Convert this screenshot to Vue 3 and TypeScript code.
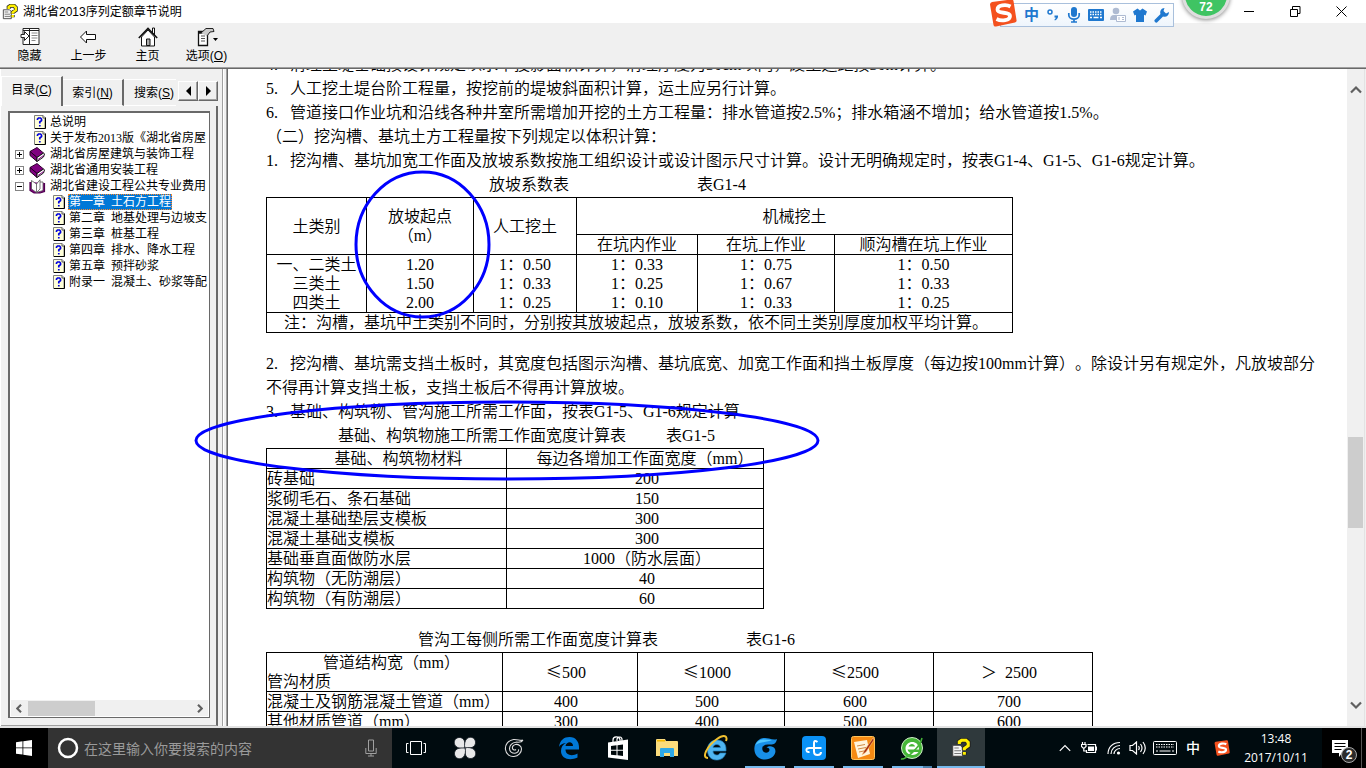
<script setup lang="ts">
import { ref } from 'vue'

interface TreeItem {
  label: string
  kind: 'page' | 'closed' | 'open'
  level: 1 | 2
}

const tree: TreeItem[] = [
  { label: '总说明', kind: 'page', level: 1 },
  { label: '关于发布2013版《湖北省房屋', kind: 'page', level: 1 },
  { label: '湖北省房屋建筑与装饰工程', kind: 'closed', level: 1 },
  { label: '湖北省通用安装工程', kind: 'closed', level: 1 },
  { label: '湖北省建设工程公共专业费用', kind: 'open', level: 1 },
  { label: '第一章\u00a0 土石方工程', kind: 'page', level: 2 },
  { label: '第二章\u00a0 地基处理与边坡支', kind: 'page', level: 2 },
  { label: '第三章\u00a0 桩基工程', kind: 'page', level: 2 },
  { label: '第四章\u00a0 排水、降水工程', kind: 'page', level: 2 },
  { label: '第五章\u00a0 预拌砂浆', kind: 'page', level: 2 },
  { label: '附录一\u00a0 混凝土、砂浆等配', kind: 'page', level: 2 },
]
const selected = ref(5)

const slopes: string[][] = [
  ['一、二类土', '三类土', '四类土'],
  ['1.20', '1.50', '2.00'],
  ['1：0.50', '1：0.33', '1：0.25'],
  ['1：0.33', '1：0.25', '1：0.10'],
  ['1：0.75', '1：0.67', '1：0.33'],
  ['1：0.50', '1：0.33', '1：0.25'],
]

const foundations: [string, string][] = [
  ['砖基础', '200'],
  ['浆砌毛石、条石基础', '150'],
  ['混凝土基础垫层支模板', '300'],
  ['混凝土基础支模板', '300'],
  ['基础垂直面做防水层', '1000（防水层面）'],
  ['构筑物（无防潮层）', '40'],
  ['构筑物（有防潮层）', '60'],
]

const pipes: string[][] = [
  ['混凝土及钢筋混凝土管道（mm）', '400', '500', '600', '700'],
  ['其他材质管道（mm）', '300', '400', '500', '600'],
]

const petalAngles = [0, 90, 180, 270]
</script>

<template>
  <div class="screen">
    <svg class="defs" aria-hidden="true">
      <symbol id="ic-page" viewBox="0 0 12 14">
        <path d="M.5.5H9l2 2V13.500H.5z" fill="#ffffd8" stroke="#808080" />
        <path d="M11.500 2.500V13.500H1" fill="none" stroke="#000" />
        <path d="M9 .5V3h2" fill="#fff" stroke="#555" />
        <path d="M3.500 5V4L4.500 3h2L7.500 4v1.500L5.800 7v1.500M5.800 10v1.600" fill="none" stroke="#0000e0" stroke-width="1.700" />
      </symbol>
      <symbol id="ic-book" viewBox="0 0 17 15">
        <path d="M1 4.500 8 .5l6.500 5.500L8 10.500z" fill="#800080" stroke="#300030" />
        <path d="M1 4.500v4l7 6v-4z" fill="#800080" stroke="#200020" />
        <path d="M8 10.500 14.500 6l1 1-1 3L8 14.500z" fill="#fff" stroke="#111" />
        <path d="m9 12.500 5.500-4" stroke="#800080" />
      </symbol>
      <symbol id="ic-open" viewBox="0 0 17 15">
        <path d="M1 3v8.500L5 14h6l4.500-1.500V4" fill="#800080" stroke="#500050" stroke-width="1.200" />
        <path d="M2.500 1.500v8.500l5 3.500V5zM7.500 5 11 .8v9.200l-3.500 3.500M11 3h3v8.500l-6.500 2" fill="#fff" stroke="#555" stroke-width=".8" />
      </symbol>
      <symbol id="ic-help" viewBox="0 0 18 18">
        <path d="M1.500 6.500h7l2 2v8h-9z" fill="#f4f4f4" stroke="#444" />
        <path d="M3 9h4M3 11.500h6M3 14h6" stroke="#777" />
        <path d="M7.500 5.500V3.500L9.500 2h4l2 2v3L12 9.500v1.500M12 12.500v2.500" fill="none" stroke="#222" stroke-width="4.500" />
        <path d="M7.500 5.500V3.500L9.500 2h4l2 2v3L12 9.500v1.500M12 12.500v2.500" fill="none" stroke="#fff000" stroke-width="2.800" />
      </symbol>
      <symbol id="ic-sogou" viewBox="0 0 28 28">
        <path d="M1 5.500Q1 3.500 3 3L22 .5Q24 0 24.500 2L27.500 21Q28 23 26 23.500L7 27.500Q5 28 4.500 26z" fill="#f4511e" />
        <path d="M21.500 7.500C17 5 8.500 6 8.500 10.500c0 5 12.500 1.500 12.500 6.500 0 4.500-8.500 5.500-13.500 3" fill="none" stroke="#fff" stroke-width="3.800" />
      </symbol>
      <symbol id="ic-keys" viewBox="0 0 24 14">
        <rect x=".5" y=".5" width="23" height="13" rx="1" fill="none" stroke="currentColor" />
        <path d="M3 3.500h18M3 6h18" stroke="currentColor" stroke-width="1.200" stroke-dasharray="1.500 1" />
        <path d="M3 10h2m1.500 0h11m1.500 0h2" stroke="currentColor" stroke-width="1.200" />
      </symbol>
    </svg>

    <header class="titlebar">
      <svg class="app-icon"><use href="#ic-help" /></svg>
      <h1>湖北省2013序列定额章节说明</h1>
      <div class="window-buttons">
        <button type="button" aria-label="最小化"><svg viewBox="0 0 11 11"><path d="M0 5.500h10" /></svg></button>
        <button type="button" aria-label="还原"><svg viewBox="0 0 11 11"><path d="M.5 3.500h7v7h-7zM2.500 3.500v-3h7.500v7H7.500" /></svg></button>
        <button type="button" aria-label="关闭"><svg viewBox="0 0 11 11"><path d="m.5.500 10 10m0-10-10 10" /></svg></button>
      </div>
    </header>

    <nav class="toolbar">
      <button type="button">
        <svg width="20" height="20" viewBox="0 0 20 20">
          <path d="M3 1.500h16v16H3zM9.500 2v16M3 3.500h16" fill="#fff" stroke="#222" />
          <path d="M11.500 6h6m-6 2.500h6m-6 2.500h6m-6 2.500h4" stroke="#888" />
          <path d="M1 7.500h3.500V4.500L9 9l-4.500 4.500v-3H1z" fill="#fff" stroke="#222" />
        </svg>
        <span>隐藏</span>
      </button>
      <button type="button">
        <svg width="20" height="20" viewBox="0 0 20 20"><path d="M1.500 10 7.500 4v3.500h9v5h-9V16z" fill="#fff" stroke="#111" /></svg>
        <span>上一步</span>
      </button>
      <button type="button">
        <svg width="20" height="20" viewBox="0 0 20 20">
          <path d="M3.500 10v9h13v-9L10 3z" fill="#fff" stroke="#111" />
          <path d="M14.500 1v5l2 2V1z" fill="#fff" stroke="#111" />
          <path d="M.8 11 10 1.500 19.200 11" fill="none" stroke="#111" stroke-width="1.600" />
          <path d="M8.500 18.500V12h3.500v6.500z" fill="#aaa" stroke="#111" />
        </svg>
        <span>主页</span>
      </button>
      <button type="button">
        <svg width="22" height="20" viewBox="0 0 22 20">
          <path d="M2.500 4.500h9v14h-9zM2.500 6h9" fill="#fff" stroke="#111" stroke-width="1.300" />
          <path d="M5 9h4m-4 2.500h4M5 14h4" stroke="#555" />
          <path d="m5 6 5-4.500h7l1 3-4 .5-3 4" fill="#ccc" stroke="#222" />
          <path d="M17 11h5l-2.500 3z" fill="#000" />
        </svg>
        <span>选项(<u>O</u>)</span>
      </button>
    </nav>

    <div class="workspace">
      <aside class="sidebar">
        <div class="tabs">
          <div class="tab-list" role="tablist">
            <button type="button" role="tab" class="tab current" aria-selected="true">目录(<u>C</u>)</button>
            <button type="button" role="tab" class="tab">索引(<u>N</u>)</button>
            <button type="button" role="tab" class="tab last">搜索(<u>S</u>)</button>
          </div>
          <button type="button" class="spin" aria-label="向左"><svg viewBox="0 0 5 10"><path d="M5 0v10L0 5z" /></svg></button>
          <button type="button" class="spin" aria-label="向右"><svg viewBox="0 0 5 10"><path d="M0 0v10l5-5z" /></svg></button>
        </div>
        <div class="tab-body">
          <div class="tree-frame">
            <ul class="tree">
              <li v-for="(item, i) in tree" :key="i" :class="['node', 'level-' + item.level]">
                <span class="expander" v-if="item.kind !== 'page'">
                  <svg viewBox="0 0 9 9">
                    <rect x=".5" y=".5" width="8" height="8" fill="#fff" stroke="#848484" />
                    <path d="M2 4.500h5" stroke="#000" />
                    <path v-if="item.kind === 'closed'" d="M4.500 2v5" stroke="#000" />
                  </svg>
                </span>
                <svg v-if="item.kind === 'page'" class="page"><use href="#ic-page" /></svg>
                <svg v-else-if="item.kind === 'closed'" class="book"><use href="#ic-book" /></svg>
                <svg v-else class="book"><use href="#ic-open" /></svg>
                <button type="button" :class="{ selected: i === selected }" @click="selected = i">{{ item.label }}</button>
              </li>
            </ul>
            <div class="h-scroll">
              <svg viewBox="0 0 6 9"><path d="M5 .8 1.200 4.500 5 8.200" /></svg>
              <div class="h-track"><div class="h-thumb"></div></div>
              <svg viewBox="0 0 6 9"><path d="M1 .8 4.800 4.500 1 8.200" /></svg>
            </div>
          </div>
        </div>
      </aside>

      <div class="splitter"></div>

      <main class="viewer">
        <article class="doc">
          <p>4.&nbsp;&nbsp; 清理土堤基础按设计规定以水平投影面积计算，清理厚度为30cm以内，废土运距按30m计算。</p>
          <p>5.&nbsp;&nbsp; 人工挖土堤台阶工程量，按挖前的堤坡斜面积计算，运土应另行计算。</p>
          <p>6.&nbsp;&nbsp; 管道接口作业坑和沿线各种井室所需增加开挖的土方工程量：排水管道按2.5%；排水箱涵不增加；给水管道按1.5%。</p>
          <p>（二）挖沟槽、基坑土方工程量按下列规定以体积计算：</p>
          <p>1.&nbsp;&nbsp; 挖沟槽、基坑加宽工作面及放坡系数按施工组织设计或设计图示尺寸计算。设计无明确规定时，按表G1-4、G1-5、G1-6规定计算。</p>
          <p class="caption slope-caption"><span>放坡系数表</span><span>表G1-4</span></p>
          <table class="slope">
            <colgroup><col class="w100"><col class="w107"><col class="w103"><col class="w121"><col class="w137"><col class="w178"></colgroup>
            <thead>
              <tr class="tall">
                <th rowspan="2">土类别</th>
                <th rowspan="2">放坡起点<br>（m）</th>
                <th rowspan="2">人工挖土</th>
                <th colspan="3">机械挖土</th>
              </tr>
              <tr><th>在坑内作业</th><th>在坑上作业</th><th>顺沟槽在坑上作业</th></tr>
            </thead>
            <tbody>
              <tr>
                <td v-for="(col, c) in slopes" :key="c"><div v-for="(v, r) in col" :key="r">{{ v }}</div></td>
              </tr>
              <tr><td colspan="6" class="note">注：沟槽，基坑中土类别不同时，分别按其放坡起点，放坡系数，依不同土类别厚度加权平均计算。</td></tr>
            </tbody>
          </table>

          <p class="after-table">2.&nbsp;&nbsp; 挖沟槽、基坑需支挡土板时，其宽度包括图示沟槽、基坑底宽、加宽工作面和挡土板厚度（每边按100mm计算）。除设计另有规定外，凡放坡部分不得再计算支挡土板，支挡土板后不得再计算放坡。</p>
          <p>3.&nbsp;&nbsp; 基础、构筑物、管沟施工所需工作面，按表G1-5、G1-6规定计算</p>
          <p class="caption base-caption"><span>基础、构筑物施工所需工作面宽度计算表</span><span>表G1-5</span></p>
          <table class="base">
            <colgroup><col class="w240"><col class="w257"></colgroup>
            <thead><tr><th>基础、构筑物材料</th><th>每边各增加工作面宽度（mm）</th></tr></thead>
            <tbody>
              <tr v-for="row in foundations" :key="row[0]"><td>{{ row[0] }}</td><td>{{ row[1] }}</td></tr>
            </tbody>
          </table>

          <p class="caption pipe-caption after-table"><span>管沟工每侧所需工作面宽度计算表</span><span>表G1-6</span></p>
          <table class="pipe">
            <colgroup><col class="w236"><col class="w135"><col class="w147"><col class="w149"><col class="w159"></colgroup>
            <thead>
              <tr class="double">
                <th><div class="across">管道结构宽（mm）</div><div>管沟材质</div></th>
                <th><span class="sign">≤</span>500</th>
                <th><span class="sign">≤</span>1000</th>
                <th><span class="sign">≤</span>2500</th>
                <th>＞&nbsp; 2500</th>
              </tr>
            </thead>
            <tbody>
              <tr v-for="row in pipes" :key="row[0]"><td v-for="(v, c) in row" :key="c">{{ v }}</td></tr>
            </tbody>
          </table>
        </article>
        <div class="v-scroll">
          <svg viewBox="0 0 12 10"><path d="M1 7.500 6 2.500l5 5" /></svg>
          <div class="v-track"><div class="v-thumb"></div></div>
          <svg viewBox="0 0 12 10"><path d="m1 2.500 5 5 5-5" /></svg>
        </div>
      </main>
    </div>

    <footer class="taskbar">
      <button type="button" class="start" aria-label="开始">
        <svg width="16" height="16" viewBox="0 0 16 16"><path d="M0 2.200 6.500 1.300v6.200H0zM7.300 1.200 16 0v7.500H7.300zM0 8.300h6.500v6.200L0 13.700zM7.300 8.300H16V16l-8.700-1.200z" fill="#fff" /></svg>
      </button>
      <label class="search">
        <svg width="22" height="22" viewBox="0 0 22 22"><circle cx="11" cy="11" r="9" fill="none" stroke="#fff" stroke-width="2.500" /></svg>
        <input type="text" placeholder="在这里输入你要搜索的内容" aria-label="搜索">
        <svg width="12" height="18" viewBox="0 0 12 18"><path d="M3.500 1h5v11h-5zM.8 9v5.500h10.400V9M6 14.500V17M3 17h6" fill="none" stroke="#a0a0a0" /></svg>
      </label>

      <div class="apps">
        <button type="button" aria-label="任务视图">
          <svg width="22" height="18" viewBox="0 0 22 18"><path d="M5.500 2.500h11v13h-11zM3.500 4.500h-2v9h2M18.500 4.500h2v9h-2" fill="none" stroke="#fff" /></svg>
        </button>
        <button type="button" aria-label="风车">
          <svg width="24" height="24" viewBox="0 0 24 24">
            <path
              v-for="a in petalAngles"
              :key="a"
              d="M12 12C9 13 5 12.500 2.500 10 .5 7.500 1 3.500 4 2c2.500-1.200 5.500-.5 7 2 1.300 2.500 1 5.500 1 8z"
              :transform="`rotate(${a} 12 12)`"
              fill="#e8e8e8"
              stroke="#101820"
              stroke-width=".8"
            />
          </svg>
        </button>
        <button type="button" class="group-end" aria-label="旋风">
          <svg width="22" height="22" viewBox="0 0 22 22"><path d="M20 3c-2.500 1.500-5-1-9.500-.5C5 3.500 1.800 8 2.500 12.500 3 17 7 20 11 19.500c4.500-.5 7.500-4 7.500-7.500 0-3-3-5-6-4.500-2.500.5-3.500 2.500-3 4 .5 1.500 2.500 2 3.500 1M20 3c-1.500 3-4.500 2-7 2.200-4 .3-6.500 3.300-6.500 6.300 0 3 2.500 5 5.500 4.800 2.500-.3 3.800-2 3.500-4" fill="none" stroke="#ddd" stroke-width="1.100" /></svg>
        </button>
        <button type="button" aria-label="Edge">
          <svg width="22" height="24" viewBox="0 0 22 24"><path d="M1 11C2 4 6 1 11.500 1 18 1 21 6 21 11v2.500H7.500c0 6 7 7 12 4v4C12 25 3 23 3 15c0-4 2-6.500 5-8-4 .5-6 2-7 4zm6.500-1H15c0-5-6.500-5-7.500 0z" fill="#0078d7" /></svg>
        </button>
        <button type="button" aria-label="应用商店">
          <svg width="22" height="24" viewBox="0 0 22 24"><path d="M1 6.500 21 3.500V24L1 21.500z" fill="#fff" /><path d="M6 6V4c0-4 6-4 7-.5V5M10 5V3c1-3 5-2.500 5 .5V5" fill="none" stroke="#fff" stroke-width="1.200" /><path d="m4 10 5.500-.7v4.500H4zm6.500-.8L16 8.500v5.300h-5.500zM4 14.800h5.500v4.400L4 18.700zm6.500 0H16V20l-5.500-.7z" fill="#00090c" /></svg>
        </button>
        <button type="button" aria-label="文件资源管理器">
          <svg width="22" height="20" viewBox="0 0 22 20"><path d="M0 2Q0 1 1 1h8l1 2h11q1 0 1 1v14H0z" fill="#fbdc7c" /><path d="M1 2h8v1.500H1z" fill="#f5b800" /><path d="M4 19v-8q0-1 1-1h12q1 0 1 1v8h-4v-4H8v4z" fill="#2ea8e6" /></svg>
        </button>
        <button type="button" aria-label="Internet Explorer">
          <svg width="26" height="26" viewBox="0 0 26 26"><path d="M14 5c6 0 9 4 9 9v2H10c0 5 6 5 7 2h6c-2 5-5 7-9.500 7C8 25 4.500 21 4.500 15S8 5 14 5zm-4 7.500h7.500c-.5-4-7-4-7.500 0z" fill="#4fb5f0" stroke="#247eb9" stroke-width=".7" /><path d="M5 23C-2 23 4 11 14 4c7-5 11-3 9 2" fill="none" stroke="#f2c230" stroke-width="2" /></svg>
        </button>
        <button type="button" class="running" aria-label="浏览器">
          <svg width="26" height="26" viewBox="0 0 26 26"><path d="M25 4c-1 5-4 6-8 5.500-5-.5-7.500 2-6.500 5.500 1 3.500 6.500 3.500 7 0 0-1.500-1-2.500-3-2.500 2-2 7-2 8.500 1.500C25 19 20 24.500 13 24.500 6 24.500 1.500 19 2.500 12 3.500 5 10 1.500 17 3.500c3 1 6 1.500 8 .5z" fill="#1890e8" /><path d="M20 5C13 5 7 2.500 3.500 10 8.500 6.500 14 7.500 20 5z" fill="#52c8ff" /></svg>
        </button>
        <button type="button" class="running" aria-label="十字">
          <svg width="24" height="24" viewBox="0 0 24 24"><rect width="24" height="24" rx="4" fill="#0a91f5" /><path d="M15.500 6Q12 3.500 12 7v8.500q0 3.500 3.500 3.500t3.500-3M19.500 12H7.500Q4 12 4.500 14.500q.5 2 3 1.500" fill="none" stroke="#fff" stroke-width="2" /></svg>
        </button>
        <button type="button" class="running" aria-label="便签">
          <svg width="24" height="24" viewBox="0 0 24 24"><rect x=".5" y=".5" width="23" height="23" rx="2" fill="#f58a13" stroke="#ffc35a" /><path d="m3 6 13-2 3 14-12 4z" fill="#fff4dc" /><path d="m6 10 8-1.500M7 13l8-1.500M8 16l7-1.500" stroke="#cf8a45" /><path d="m22 2-9 13-2 4 4-3 8-12z" fill="#a32b12" stroke="#ffce80" stroke-width=".6" /></svg>
        </button>
        <button type="button" class="running multi" aria-label="绿色浏览器">
          <svg width="24" height="24" viewBox="0 0 24 24"><circle cx="12" cy="12" r="10.500" fill="#46b638" stroke="#cfeec8" /><path d="M7.500 13.500h11.500C19 3 5.500 4 5.500 12.500c0 7.500 10 8 13 3.500h-5c-2 1.800-5 1-6-2.500zm1-3c1-3.500 6-3.500 6.500 0z" fill="#fff" /><path d="M1 23C5 24 20 12 22 2" fill="none" stroke="#46b638" stroke-width="1.500" /></svg>
        </button>
        <button type="button" class="running active" aria-label="帮助">
          <svg width="20" height="20"><use href="#ic-help" /></svg>
        </button>
      </div>

      <div class="tray">
        <svg class="t-chevron" viewBox="0 0 12 8"><path d="m.8 6.800 5.200-5.200 5.200 5.200" /></svg>
        <svg class="t-battery" viewBox="0 0 16 12"><path d="M6.500 2.500h8v8h-9V8M15.500 4.500v4" /><path d="M7 4.500h6v4.500H7z" fill="#fff" stroke="none" /><path d="M1.500 0v2m2.500-2v2M.5 2.500h4.500v2L3.500 6h-1.500L.5 4.500zM2.800 6v3h2.700" /></svg>
        <svg class="t-wifi" viewBox="0 0 14 14"><path d="M1 13C1 6 6 1.500 13 1.500M4 13c0-5 4-8.500 9-8.500M7 13c0-3 3-5.500 6-5.500" /><circle cx="11.500" cy="12" r="1.600" fill="#fff" stroke="none" /></svg>
        <svg class="t-volume" viewBox="0 0 16 14"><path d="M.5 4.500h2.500l4-3.500v12L3 9.500H.5zM9 5q1.500 2 0 4m2-6q3 4 0 8m2.500-10q4.500 6 0 12" /></svg>
        <svg class="t-keys"><use href="#ic-keys" /></svg>
        <span class="t-lang">中</span>
        <svg class="t-sogou"><use href="#ic-sogou" /></svg>
      </div>
      <div class="clock"><time>13:48</time><time>2017/10/11</time></div>
      <button type="button" class="notices" aria-label="通知">
        <svg width="16" height="17" viewBox="0 0 16 17"><path d="M0 0h16v13h-6l-3 4v-4H0z" fill="#fff" /><path d="M2.500 3.500h11m-11 3h11m-11 3h7" stroke="#000" /></svg>
        <span class="count">2</span>
      </button>
      <div class="peek"></div>
    </footer>

    <div class="ime-bar">
      <svg class="ime-logo"><use href="#ic-sogou" /></svg>
      <b>中</b>
      <svg width="14" height="16" viewBox="0 0 14 16"><circle cx="4" cy="5" r="2" fill="none" stroke="#1f78cf" stroke-width="1.500" /><path d="M8.500 8.500h3.500q.5 3-3 5l-.7-.8q1.500-1 1.400-2.200H8.500z" fill="#1f78cf" /></svg>
      <svg width="14" height="16" viewBox="0 0 14 16"><rect x="4" width="6" height="10" rx="3" fill="#1f78cf" /><path d="M1.800 6v2c0 5.500 10.400 5.500 10.400 0V6M7 12v3M4 15h6" fill="none" stroke="#1f78cf" stroke-width="1.700" /></svg>
      <svg width="16" height="12" viewBox="0 0 16 12"><rect width="16" height="12" rx="1" fill="#1f78cf" /><path d="M2 3h12M2 5.500h12" stroke="#fff" stroke-width="1.300" stroke-dasharray="1.500 1" /><path d="M2 8.500h2m1.500 0h5m1.500 0h2" stroke="#fff" stroke-width="1.300" /></svg>
      <svg width="16" height="16" viewBox="0 0 16 16"><circle cx="6" cy="4" r="3.300" fill="#aebbd2" /><path d="M0 13q0-5 4-5h4q2 0 3 2v3z" fill="#aebbd2" /><path d="M6.500 8.500h9v6h-9z" fill="#fff" stroke="#aebbd2" /><path d="M9 10v3m3-2.500h2m-2 2h2" stroke="#aebbd2" /></svg>
      <svg width="14" height="14" viewBox="0 0 14 14"><path d="m4.500.5 2.500 2 2.500-2L14 3.500l-1.500 4-1.500-.7V14H3V6.800l-1.500.7L0 3.500z" fill="#1f78cf" /></svg>
      <svg width="15" height="15" viewBox="0 0 15 15"><path d="M10.500 0 9.500 3l2.500 2.500 3-1.500c0 4-3 5.500-6 4.500L3 14.500q-1 .5-2-.5t-.5-2L6.500 6C5.500 3 7.500 0 10.500 0z" fill="#1f78cf" /></svg>
    </div>

    <div class="ball">72</div>

    <svg class="marks" width="840" height="500" viewBox="0 0 840 500" aria-hidden="true">
      <ellipse cx="422.500" cy="244.500" rx="66.500" ry="72.500" />
      <ellipse cx="507" cy="440.500" rx="311" ry="38.500" />
    </svg>
  </div>
</template>

<style>
html,
body {
  margin: 0;
  overflow: hidden;
}
</style>

<style scoped>
* {
  box-sizing: border-box;
}
.screen {
  position: relative;
  display: flex;
  flex-direction: column;
  height: 100vh;
  overflow: hidden;
  background: #f0f0f0;
  color: #000;
  font: 12px/16px "Liberation Sans", "Noto Sans CJK SC", sans-serif;
  text-spacing-trim: space-all;
}
button {
  margin: 0;
  padding: 0;
  border: 0;
  background: none;
  color: inherit;
  font: inherit;
}
svg {
  display: block;
  flex: none;
}
.defs {
  position: absolute;
  width: 0;
  height: 0;
}

.titlebar {
  display: flex;
  align-items: center;
  flex: none;
  height: 23px;
  background: #fff;
}
.app-icon {
  width: 16px;
  height: 16px;
  margin: 0 5px 0 2px;
}
h1 {
  margin: 0;
  font-size: 12px;
  font-weight: 400;
}
.window-buttons {
  display: flex;
  margin-left: auto;
  margin-right: 2px;
}
.window-buttons button {
  display: flex;
  align-items: center;
  justify-content: center;
  width: 46px;
  height: 20px;
}
.window-buttons svg {
  width: 11px;
  height: 11px;
}
.window-buttons path {
  fill: none;
  stroke: #000;
}

.toolbar {
  display: flex;
  flex: none;
  height: 46px;
  border-bottom: 1px solid #696969;
  box-shadow: inset 0 -1px #a0a0a0;
}
.toolbar button {
  display: flex;
  flex-direction: column;
  align-items: center;
  gap: 1px;
  width: 59px;
  padding-top: 4px;
}

.workspace {
  display: flex;
  flex: 1;
  min-height: 0;
  border-bottom: 2px solid #e3e3e3;
}
.sidebar {
  display: flex;
  flex-direction: column;
  flex: none;
  width: 218px;
  padding-top: 7px;
  border-left: 1px solid #fff;
}
.tabs {
  display: flex;
  align-items: center;
  height: 30px;
}
.tab-list {
  display: flex;
  align-items: flex-end;
  flex: 1;
  height: 30px;
}
.tab {
  width: 61px;
  height: 27px;
  border-top: 1px solid #fff;
  border-right: 2px solid #696969;
  border-bottom: 1px solid #fff;
  white-space: nowrap;
}
.tab.current {
  width: 62px;
  height: 30px;
  padding-bottom: 4px;
  border-left: 1px solid #fff;
  border-bottom: 0;
}
.tab.last {
  width: 52px;
  padding-left: 8px;
  border-right: 0;
}
.spin {
  display: flex;
  align-items: center;
  justify-content: center;
  width: 20px;
  height: 20px;
  border: 1px solid;
  border-color: #fff #696969 #696969 #fff;
  box-shadow: inset -1px -1px #a0a0a0;
}
.spin svg {
  width: 5px;
  height: 10px;
}
.tab-body {
  display: flex;
  flex: 1;
  min-height: 0;
  padding: 5px 6px 7px 7px;
  border-right: 2px solid #696969;
  border-bottom: 1px solid #a0a0a0;
}
.tree-frame {
  display: flex;
  flex-direction: column;
  flex: 1;
  min-width: 0;
  padding: 1px;
  border: 2px solid #696969;
  border-right-width: 1px;
  border-bottom-width: 1px;
  background: #fff;
}
.tree {
  flex: 1;
  min-height: 0;
  margin: 0;
  padding: 0;
  overflow: hidden;
  list-style: none;
  font-family: "Liberation Serif", "Noto Sans CJK SC", serif;
}
.node {
  display: flex;
  align-items: center;
  position: relative;
  height: 16px;
  padding-left: 18px;
  white-space: nowrap;
}
.level-2 {
  padding-left: 37px;
}
.expander {
  width: 9px;
  margin-left: -14px;
  margin-right: 5px;
}
.expander svg {
  width: 9px;
  height: 9px;
}
.page {
  width: 12px;
  height: 14px;
  margin: 0 3px 0 5px;
}
.book {
  width: 17px;
  height: 15px;
  margin-right: 3px;
}
.node button {
  height: 16px;
  padding: 0 1px;
  line-height: 16px;
}
.node button.selected {
  background: #0078d7;
  color: #fff;
  outline: 1px dotted #ff8728;
  outline-offset: -1px;
}
.h-scroll {
  display: flex;
  align-items: center;
  height: 16px;
  padding: 0 5px;
  background: #f0f0f0;
}
.h-scroll svg {
  width: 6px;
  height: 9px;
}
.h-scroll path,
.v-scroll path {
  fill: none;
  stroke: #606060;
  stroke-width: 2.2;
}
.h-track {
  flex: 1;
  height: 15px;
  padding: 0 6px;
}
.h-thumb {
  width: 41%;
  height: 100%;
  background: #cdcdcd;
}

.splitter {
  flex: none;
  width: 10px;
  border-right: 1px solid #696969;
  background: linear-gradient(90deg, #f0f0f0 4px, #a0a0a0 4px, #a0a0a0 5px, #fff 5px, #fff 6px, #f0f0f0 6px, #f0f0f0 8px, #a0a0a0 8px);
}

.viewer {
  display: flex;
  flex: 1;
  min-width: 0;
  margin-right: 1px;
  border-right: 1px solid #e3e3e3;
  background: #fff;
}
.doc {
  flex: 1;
  min-width: 0;
  padding: 0 20px 0 38px;
  overflow: hidden;
  font-family: "Liberation Serif", "Noto Sans CJK SC", serif;
  font-size: 16px;
  font-weight: 350;
  line-height: 24px;
}
.doc p {
  margin: 0;
}
.doc p:first-child {
  margin-top: -16px;
}
.doc .after-table {
  margin-top: 19px;
}
.caption {
  display: flex;
}
.slope-caption {
  gap: 128px;
  padding-left: 223px;
}
.base-caption {
  gap: 40px;
  padding-left: 72px;
}
.pipe-caption {
  gap: 88px;
  padding-left: 152px;
}
table {
  table-layout: fixed;
  border-collapse: collapse;
  line-height: 19px;
}
.slope {
  width: 747px;
}
.base {
  width: 498px;
}
.pipe {
  width: 827px;
}
.w100 { width: 100px; }
.w103 { width: 103px; }
.w107 { width: 107px; }
.w121 { width: 121px; }
.w135 { width: 135px; }
.w137 { width: 137px; }
.w147 { width: 147px; }
.w149 { width: 149px; }
.w159 { width: 159px; }
.w178 { width: 178px; }
.w236 { width: 236px; }
.w240 { width: 240px; }
.w257 { width: 257px; }
th,
td {
  padding: 0;
  border: 1px solid #000;
  font-weight: inherit;
  text-align: center;
  white-space: nowrap;
}
.tall {
  height: 37px;
}
.double {
  height: 38px;
}
.slope .note {
  padding-left: 17px;
  text-align: left;
}
.base th,
.base td + td {
  padding-left: 24px;
}
.base th + th {
  padding-left: 20px;
}
.base td:first-child,
.pipe td:first-child,
.pipe th:first-child {
  text-align: left;
}
.pipe th + th,
.pipe td + td {
  padding-right: 8px;
}
.across {
  padding-left: 56px;
}
.sign {
  display: inline-block;
  width: 16px;
  font-family: "Noto Sans CJK SC", sans-serif;
}
.v-scroll {
  display: flex;
  flex-direction: column;
  align-items: center;
  flex: none;
  width: 17px;
  padding: 16px 0;
  background: #f0f0f0;
}
.v-scroll svg {
  width: 12px;
  height: 10px;
}
.v-track {
  flex: 1;
  width: 15px;
  padding-top: 342px;
}
.v-thumb {
  height: 91px;
  background: #cdcdcd;
}

.taskbar {
  display: flex;
  flex: none;
  height: 40px;
  background: #000b0f;
  color: #fff;
}
.start {
  display: flex;
  align-items: center;
  justify-content: center;
  width: 48px;
  background: #000;
}
.search {
  display: flex;
  align-items: center;
  width: 344px;
  padding: 0 15px 0 9px;
  background: #333;
}
.search input {
  flex: 1;
  min-width: 0;
  margin: 0;
  padding: 0 5px;
  border: 0;
  outline: 0;
  background: none;
  color: #fff;
  font: 14px/20px "Noto Sans CJK SC", sans-serif;
}
.search input::placeholder {
  color: #9a9a9a;
  opacity: 1;
}
.apps {
  display: flex;
  gap: 1px;
}
.apps button {
  display: flex;
  align-items: center;
  justify-content: center;
  position: relative;
  width: 48px;
}
.apps .group-end {
  margin-right: 6px;
}
.running::after {
  content: "";
  position: absolute;
  right: 4px;
  bottom: 0;
  left: 4px;
  height: 2px;
  background: #76b9ed;
}
.multi::after {
  background: linear-gradient(90deg, #76b9ed 31px, #4d81ac 31px);
}
.active {
  background: #2f393c;
}
.active::after {
  right: 0;
  left: 0;
}
.tray {
  display: flex;
  align-items: center;
  margin-left: auto;
}
.tray path {
  fill: none;
  stroke: #fff;
  stroke-width: 1.2;
}
.tray .t-battery path:nth-child(2) {
  fill: #fff;
  stroke: none;
}
.tray .t-sogou {
  width: 16px;
  height: 16px;
}
.t-chevron {
  width: 12px;
  height: 8px;
  margin-right: 10px;
}
.t-battery {
  width: 16px;
  height: 12px;
  margin-right: 10px;
}
.t-wifi {
  width: 14px;
  height: 14px;
  margin-right: 8px;
}
.t-volume {
  width: 17px;
  height: 14px;
  margin-right: 7px;
}
.t-keys {
  width: 24px;
  height: 14px;
  margin-right: 9px;
}
.t-lang {
  margin-right: 14px;
  font-size: 14px;
  font-weight: 500;
  line-height: 20px;
}
.clock {
  display: flex;
  flex-direction: column;
  justify-content: center;
  width: 92px;
  font-family: "Open Sans", sans-serif;
  line-height: 19px;
  text-align: center;
}
.notices {
  display: flex;
  align-items: center;
  justify-content: center;
  position: relative;
  width: 39px;
  background: #000;
}
.notices svg {
  margin-right: 4px;
}
.count {
  position: absolute;
  top: 19px;
  left: 19px;
  width: 16px;
  height: 16px;
  border: 1px solid #aaa;
  border-radius: 50%;
  background: #2b2b2b;
  font-weight: 700;
  line-height: 14px;
  text-align: center;
}
.peek {
  width: 5px;
  border-left: 1px solid #555;
  background: #000;
}

.ime-bar {
  display: flex;
  align-items: center;
  justify-content: space-between;
  position: absolute;
  top: 3px;
  right: 192px;
  width: 174px;
  height: 24px;
  padding: 0 4px 0 23px;
  border: 1px solid #a9c0dc;
  background: linear-gradient(#fff, #eef5fc);
  color: #1f78cf;
  font-size: 15px;
}
.ime-logo {
  position: absolute;
  top: -5px;
  left: -12px;
  width: 28px;
  height: 28px;
}
.ball {
  position: absolute;
  top: -29px;
  right: 136px;
  width: 48px;
  height: 48px;
  padding-top: 25px;
  border: 3px solid #dedede;
  border-radius: 50%;
  background: #3fc463;
  box-shadow: 0 1px 4px #888;
  color: #fff;
  font-size: 12px;
  font-weight: 700;
  line-height: 16px;
  text-align: center;
}
.marks {
  position: absolute;
  top: 0;
  left: 0;
  pointer-events: none;
}
.marks ellipse {
  fill: none;
  stroke: #00f;
  stroke-width: 3;
}
</style>
